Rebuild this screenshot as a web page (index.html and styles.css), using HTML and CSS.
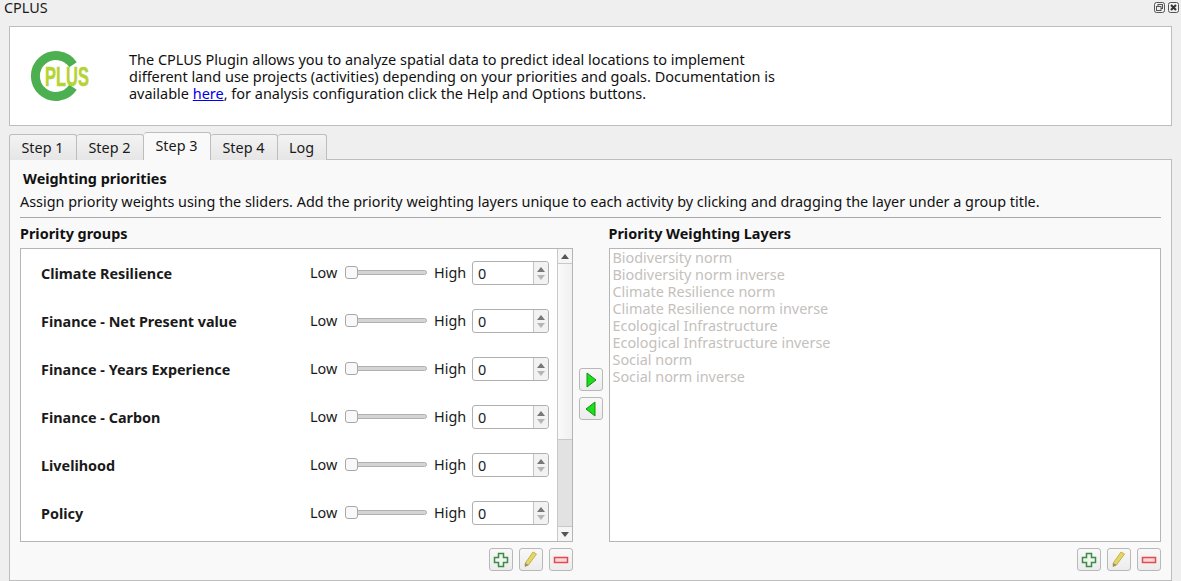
FILE: index.html
```html
<!DOCTYPE html>
<html lang="en">
<head>
  <meta charset="UTF-8">
  <title>CPLUS</title>
  <link rel="stylesheet" href="styles.css">
</head>
<body>

  <div class="titlebar">
    <span>CPLUS</span>
    <div class="dock-btns">
      <svg width="11" height="11" viewBox="0 0 11 11"><rect x="0.5" y="0.5" width="10" height="10" rx="2" fill="none" stroke="#555"/><rect x="4" y="2.5" width="4.5" height="4" fill="none" stroke="#555"/><rect x="2.5" y="4.5" width="4.5" height="4" fill="#efefef" stroke="#555"/></svg>
      <svg width="11" height="11" viewBox="0 0 11 11"><rect x="0.5" y="0.5" width="10" height="10" rx="2" fill="none" stroke="#555"/><path d="M3 3l5 5M8 3l-5 5" stroke="#333" stroke-width="2"/></svg>
    </div>
  </div>

  <div class="banner">
    <svg class="logo" width="60" height="52" viewBox="0 0 60 52">
      <path d="M43 14.7A20.5 20.5 0 1 0 43 37.3" fill="none" stroke="#4caf50" stroke-width="9"/>
      <text transform="translate(15 36) scale(0.61 1)" class="logo-text">PLUS</text>
    </svg>
    <p>The CPLUS Plugin allows you to analyze spatial data to predict ideal locations to implement<br>
    different land use projects (activities) depending on your priorities and goals. Documentation is<br>
    available <a href="#">here</a>, for analysis configuration click the Help and Options buttons.</p>
  </div>

  <div class="tabs">
    <div class="tab">Step 1</div>
    <div class="tab">Step 2</div>
    <div class="tab active">Step 3</div>
    <div class="tab">Step 4</div>
    <div class="tab short">Log</div>
  </div>

  <div class="pane">
    <h3>Weighting priorities</h3>
    <p class="intro">Assign priority weights using the sliders. Add the priority weighting layers unique to each activity by clicking and dragging the layer under a group title.</p>
    <hr>

    <div class="columns">
      <div class="col">
        <h4>Priority groups</h4>
        <div class="groups-box">
          <div class="groups" id="groups"></div>
          <div class="scrollbar">
            <div class="sb-btn"><span class="up"></span></div>
            <div class="sb-thumb"></div>
            <div class="sb-groove"></div>
            <div class="sb-btn bottom"><span class="down"></span></div>
          </div>
        </div>
        <div class="tools">
          <button class="tool"><svg width="16" height="16" viewBox="0 0 16 16"><path d="M5.5 1.5h5v4h4v5h-4v4h-5v-4h-4v-5h4z" fill="#eef5ee" stroke="#3f8a4a" stroke-width="1.5"/></svg></button>
          <button class="tool"><svg width="16" height="18" viewBox="0 0 16 18"><path d="M10 1l3.500 2L5.500 14 2 15.500l.3-3.500z" fill="#e5d566" stroke="#c4b44e"/><path d="M2.300 12L2 15.500l3.500-1.500z" fill="#8a8a80"/></svg></button>
          <button class="tool"><svg width="16" height="16" viewBox="0 0 16 16"><rect x="1.500" y="5.500" width="13" height="5" fill="#f6dada" stroke="#e8474c" stroke-width="1.500"/></svg></button>
        </div>
      </div>

      <div class="arrows">
        <button class="tool"><svg width="14" height="16" viewBox="0 0 14 16"><path d="M3 1l9 7-9 7z" fill="#19e019" stroke="#148f14"/></svg></button>
        <button class="tool"><svg width="14" height="16" viewBox="0 0 14 16"><path d="M11 1L2 8l9 7z" fill="#19e019" stroke="#148f14"/></svg></button>
      </div>

      <div class="col">
        <h4>Priority Weighting Layers</h4>
        <ul class="layers">
          <li>Biodiversity norm</li>
          <li>Biodiversity norm inverse</li>
          <li>Climate Resilience norm</li>
          <li>Climate Resilience norm inverse</li>
          <li>Ecological Infrastructure</li>
          <li>Ecological Infrastructure inverse</li>
          <li>Social norm</li>
          <li>Social norm inverse</li>
        </ul>
        <div class="tools">
          <button class="tool"><svg width="16" height="16" viewBox="0 0 16 16"><path d="M5.5 1.5h5v4h4v5h-4v4h-5v-4h-4v-5h4z" fill="#eef5ee" stroke="#3f8a4a" stroke-width="1.5"/></svg></button>
          <button class="tool"><svg width="16" height="18" viewBox="0 0 16 18"><path d="M10 1l3.500 2L5.500 14 2 15.500l.3-3.500z" fill="#e5d566" stroke="#c4b44e"/><path d="M2.300 12L2 15.500l3.500-1.500z" fill="#8a8a80"/></svg></button>
          <button class="tool"><svg width="16" height="16" viewBox="0 0 16 16"><rect x="1.500" y="5.500" width="13" height="5" fill="#f6dada" stroke="#e8474c" stroke-width="1.500"/></svg></button>
        </div>
      </div>
    </div>
  </div>

  <script>
    const names = ['Climate Resilience', 'Finance - Net Present value', 'Finance - Years Experience', 'Finance - Carbon', 'Livelihood', 'Policy'];
    const groups = document.getElementById('groups');
    names.forEach(name => {
      const row = document.createElement('div');
      row.className = 'group-row';
      row.innerHTML = `
        <span class="group-name">${name}</span>
        <span class="lbl-low">Low</span>
        <span class="slider"><span class="handle"></span></span>
        <span class="lbl-high">High</span>
        <span class="spin"><span class="spin-val">0</span><span class="spin-btns"><span class="up"></span><span class="down"></span></span></span>
      `;
      groups.appendChild(row);
    });
  </script>

</body>
</html>
```

FILE: styles.css
```css
html, body {
  margin: 0;
  height: 581px;
  overflow: hidden;
}
body {
  font-family: "Noto Sans", sans-serif;
  font-size: 14.4px;
  color: #1a1a1a;
  background-color: #efefef;
  padding: 0 9px;
  box-sizing: border-box;
}
.titlebar {
  height: 26px;
  margin: 0 -9px;
  padding: 0 2px 0 4px;
  display: flex;
  justify-content: space-between;
  line-height: 16px;
}
.dock-btns {
  display: flex;
  gap: 3px;
  padding-top: 2px;
}
.dock-btns svg {
  display: block;
}
.banner {
  height: 100px;
  box-sizing: border-box;
  background-color: #fff;
  border: 1px solid #bdbdbd;
  display: flex;
  align-items: center;
  padding-left: 20px;
}
.logo {
  margin-right: 39px;
  flex: none;
}
.logo-text {
  font-family: "Liberation Sans", sans-serif;
  font-weight: bold;
  font-size: 27px;
  fill: #b5d334;
  stroke: #b5d334;
  stroke-width: 0.5;
}
.banner p {
  margin: 0;
  line-height: 17px;
  font-size: 14.47px;
  color: #111;
}
.banner a {
  color: #0000ee;
  text-decoration: underline;
}
.tabs {
  display: flex;
  align-items: flex-end;
  height: 34px;
  margin-bottom: -1px;
  position: relative;
}
.tab {
  width: 67px;
  height: 26px;
  box-sizing: border-box;
  border: 1px solid #bdbdbd;
  border-bottom: none;
  border-left: none;
  border-radius: 3px 3px 0 0;
  background: linear-gradient(#f3f3f3, #e6e6e6);
  padding-right: 1px;
  text-align: center;
  line-height: 26px;
  white-space: nowrap;
}
.tab:first-child {
  width: 68px;
  border-left: 1px solid #bdbdbd;
}
.tab.short {
  width: 49px;
}
.tab.active {
  height: 28px;
  background: #f9f9f9;
  line-height: 25px;
}
.pane {
  height: 422px;
  box-sizing: border-box;
  background-color: #f9f9f9;
  border: 1px solid #bdbdbd;
  padding: 10px 10px 0;
}
h3 {
  margin: 0 0 0 3px;
  font-size: 14.4px;
  line-height: 18px;
  font-weight: bold;
  color: #111;
}
.intro {
  margin: 5px 0 0;
  line-height: 18px;
  color: #111;
}
hr {
  margin: 6px 0 0;
  border: none;
  border-top: 1px solid #a8a8a8;
}
.columns {
  display: flex;
  margin-top: 7px;
}
.col {
  flex: 1;
}
.col h4 {
  margin: 0;
  font-size: 14.4px;
  line-height: 18px;
  font-weight: bold;
  color: #111;
  height: 23px;
}
.groups-box {
  height: 294px;
  box-sizing: border-box;
  border: 1px solid #b5b5b5;
  background-color: #fff;
  display: flex;
}
.groups {
  flex: 1;
}
.group-row {
  height: 48px;
  display: flex;
  align-items: center;
  padding-left: 20px;
}
.group-name {
  width: 269px;
  font-weight: bold;
}
.lbl-low {
  width: 35px;
  margin-bottom: 2px;
}
.slider {
  width: 82px;
  height: 5px;
  box-sizing: border-box;
  border: 1px solid #b0b0b0;
  border-radius: 3px;
  background-color: #d4d4d4;
  position: relative;
  margin: 0 7px 1px 0;
}
.handle {
  position: absolute;
  left: -1px;
  top: -5px;
  width: 13px;
  height: 13px;
  box-sizing: border-box;
  border: 1px solid #a8a8a8;
  border-radius: 3px;
  background-color: #f8f8f8;
}
.lbl-high {
  width: 38px;
  margin-bottom: 2px;
}
.spin {
  width: 77px;
  height: 24px;
  box-sizing: border-box;
  border: 1px solid #b0b0b0;
  border-radius: 3px;
  background-color: #fff;
  display: flex;
  justify-content: space-between;
  line-height: 23px;
}
.spin-val {
  padding-left: 5px;
}
.spin-btns {
  width: 14px;
  border-left: 1px solid #c4c4c4;
  background-color: #f2f2f2;
  border-radius: 0 3px 3px 0;
  display: flex;
  flex-direction: column;
  align-items: center;
  justify-content: center;
  gap: 3px;
}
.up {
  display: block;
  width: 0;
  height: 0;
  border-left: 4px solid transparent;
  border-right: 4px solid transparent;
  border-bottom: 5px solid #777;
}
.down {
  display: block;
  width: 0;
  height: 0;
  border-left: 4px solid transparent;
  border-right: 4px solid transparent;
  border-top: 5px solid #b5b5b5;
}
.scrollbar {
  width: 14px;
  border-left: 1px solid #c8c8c8;
  display: flex;
  flex-direction: column;
}
.sb-btn {
  height: 14px;
  display: flex;
  align-items: center;
  justify-content: center;
  background-color: #f5f5f5;
  border-bottom: 1px solid #c8c8c8;
}
.sb-btn.bottom {
  border-bottom: none;
  border-top: 1px solid #c8c8c8;
}
.sb-btn .down {
  border-top-color: #555;
}
.sb-btn .up {
  border-bottom-color: #555;
}
.sb-thumb {
  height: 175px;
  background: linear-gradient(90deg, #fafafa, #f0f0f0);
  border-bottom: 1px solid #c8c8c8;
}
.sb-groove {
  flex: 1;
  background-color: #e2e2e2;
}
.tools {
  display: flex;
  justify-content: flex-end;
  gap: 6px;
  margin-top: 6px;
}
.tool {
  width: 24px;
  height: 23px;
  padding: 0;
  box-sizing: border-box;
  border: 1px solid #b8b8b8;
  border-radius: 3px;
  background: linear-gradient(#f8f8f8, #ececec);
  display: flex;
  align-items: center;
  justify-content: center;
}
.arrows {
  width: 36px;
  flex: none;
  display: flex;
  flex-direction: column;
  align-items: center;
  gap: 6px;
  padding-top: 143px;
}
.layers {
  list-style: none;
  margin: 0;
  height: 294px;
  box-sizing: border-box;
  padding: 0 3px;
  border: 1px solid #b5b5b5;
  background-color: #fff;
  color: #c4c0bc;
  line-height: 17px;
}
```
